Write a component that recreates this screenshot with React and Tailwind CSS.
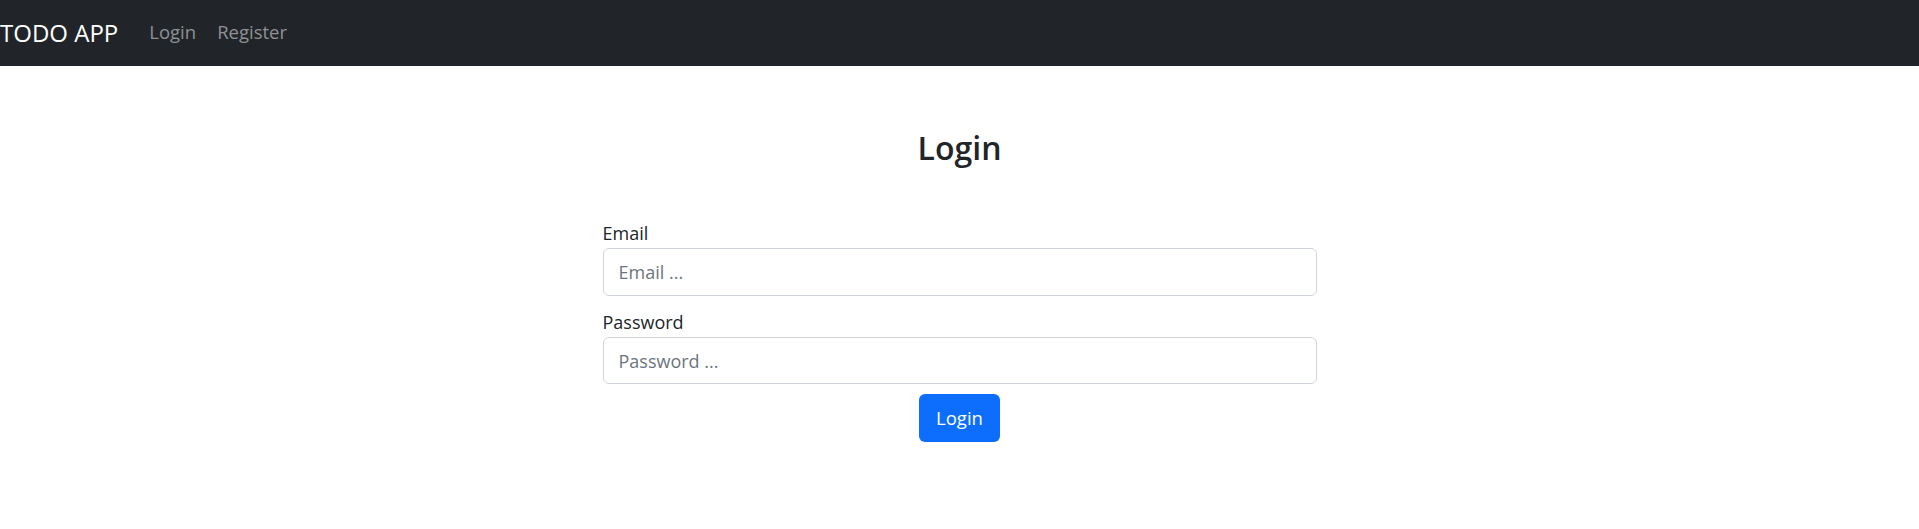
import React, { useState } from 'react'

export default function App() {
  const [email, setEmail] = useState('')
  const [password, setPassword] = useState('')

  return (
    <div className="min-h-[529px] bg-white text-[#212529] font-['Open_Sans',sans-serif]">
      {/* navbar */}
      <nav className="h-[66px] bg-[#212529] flex items-center">
        <a href="#" className="text-white text-[24px] leading-[36px]">TODO APP</a>
        <div className="flex items-center gap-[21px] ml-[31px] mb-[2px]">
          <a href="#" className="text-[#8f9194] text-[18.5px] leading-[28px]">Login</a>
          <a href="#" className="text-[#8f9194] text-[18.5px] leading-[28px]">Register</a>
        </div>
      </nav>

      <div className="pt-[63px]">
        <h3 className="text-center text-[32px] leading-[38px] font-semibold">Login</h3>

        <form className="w-[714px] mx-auto mt-[53px]" onSubmit={e => e.preventDefault()}>
          <label className="block text-[18px] leading-[27px] mb-[1px]">Email</label>
          <input
            type="email"
            value={email}
            onChange={e => setEmail(e.target.value)}
            placeholder="Email ..."
            className="block w-full h-[48px] px-[15px] text-[18px] border border-[#ced4da] rounded-[6px] placeholder:text-[#6c757d] outline-none"
          />

          <label className="block text-[18px] leading-[27px] mb-[1px] mt-[13px]">Password</label>
          <input
            type="password"
            value={password}
            onChange={e => setPassword(e.target.value)}
            placeholder="Password ..."
            className="block w-full h-[47px] px-[15px] text-[18px] border border-[#ced4da] rounded-[6px] placeholder:text-[#6c757d] outline-none"
          />

          <div className="flex justify-center mt-[10px]">
            <button type="submit" className="h-[48px] px-[17px] bg-[#0d6efd] text-white text-[18.5px] rounded-[6px]">
              Login
            </button>
          </div>
        </form>
      </div>
    </div>
  )
}
